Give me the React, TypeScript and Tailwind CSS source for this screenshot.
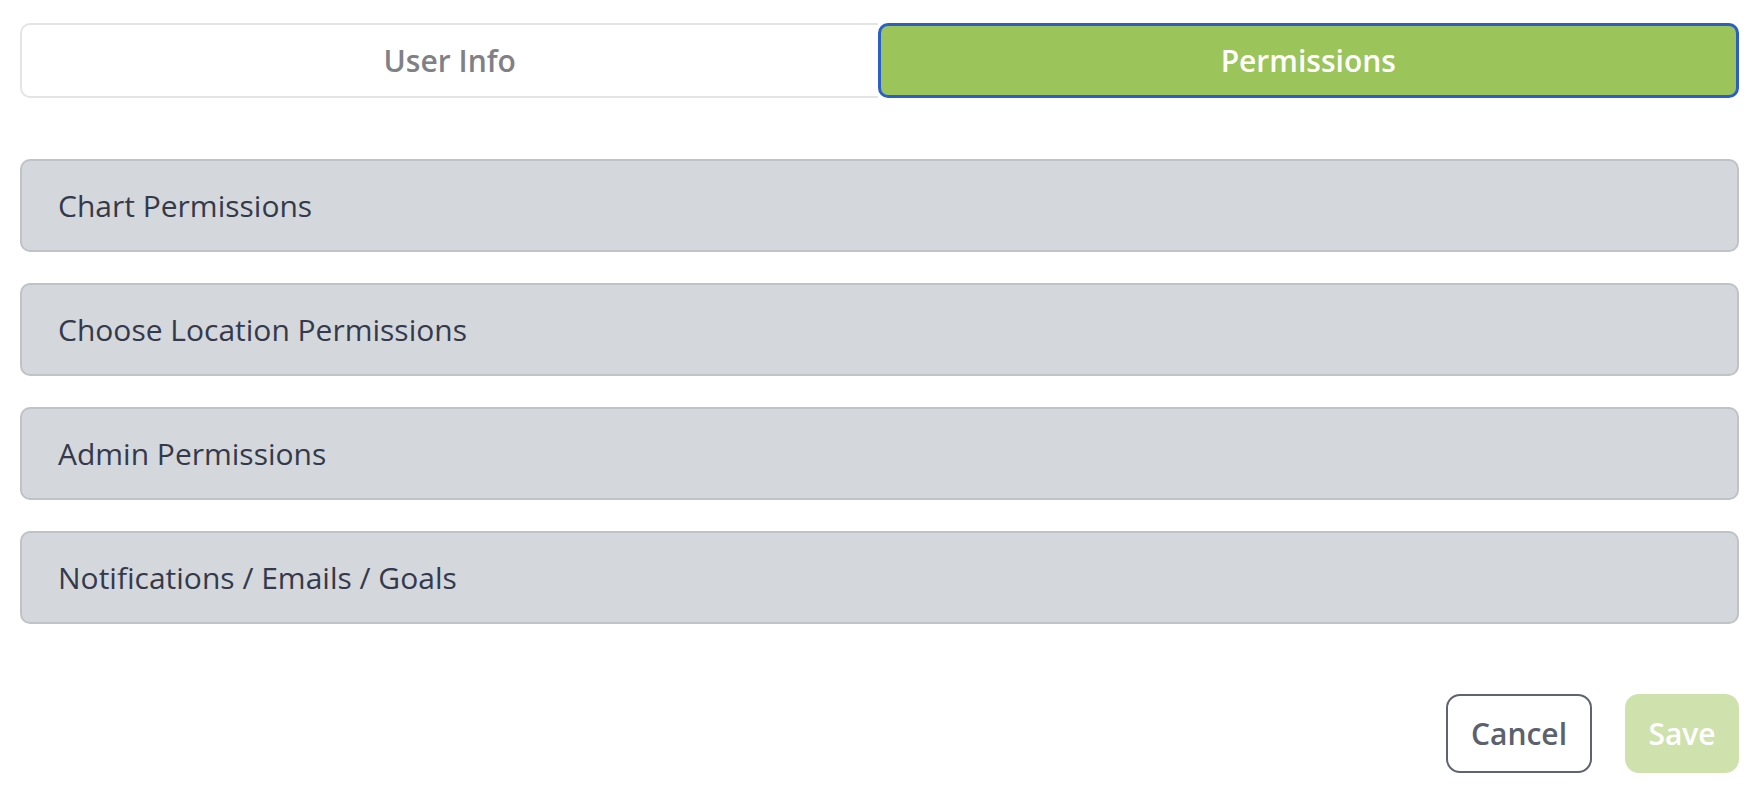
import { useState } from "react";

const sections = [
  "Chart Permissions",
  "Choose Location Permissions",
  "Admin Permissions",
  "Notifications / Emails / Goals",
];

export default function App() {
  const [tab, setTab] = useState("permissions");

  return (
    <div className="min-h-screen bg-white pl-5 pr-[25px] pt-[23px] font-['Open_Sans',sans-serif]">
      <div className="flex h-[75px]">
        <button
          onClick={() => setTab("info")}
          className={`flex-1 flex items-center justify-center text-[30px] font-semibold ${
            tab === "info"
              ? "rounded-[10px] border-[3px] border-[#2b5fc7] bg-[#9bc45b] text-white"
              : "rounded-l-[10px] border-2 border-r-0 border-[#e4e4e4] bg-white text-[#808087]"
          }`}
        >
          User Info
        </button>
        <button
          onClick={() => setTab("permissions")}
          className={`flex-1 flex items-center justify-center text-[30px] font-semibold ${
            tab === "permissions"
              ? "rounded-[10px] border-[3px] border-[#2b5fc7] bg-[#9bc45b] text-white"
              : "rounded-r-[10px] border-2 border-l-0 border-[#e4e4e4] bg-white text-[#808087]"
          }`}
        >
          Permissions
        </button>
      </div>

      <div className="mt-[61px] flex flex-col gap-[31px]">
        {sections.map((s) => (
          <div
            key={s}
            className="h-[93px] flex items-center rounded-[10px] border-2 border-[#bfc2c7] bg-[#d4d7dc] pl-[36px] text-[30px] text-[#343a4b]"
          >
            {s}
          </div>
        ))}
      </div>

      <div className="mt-[70px] flex justify-end gap-[33px]">
        <button className="h-[79px] w-[146px] rounded-[14px] border-2 border-[#5e636e] bg-white text-[30px] font-semibold text-[#5c616c]">
          Cancel
        </button>
        <button
          disabled
          className="h-[79px] w-[114px] rounded-[14px] bg-[#cfe2ae] text-[30px] font-semibold text-white"
        >
          Save
        </button>
      </div>
    </div>
  );
}
